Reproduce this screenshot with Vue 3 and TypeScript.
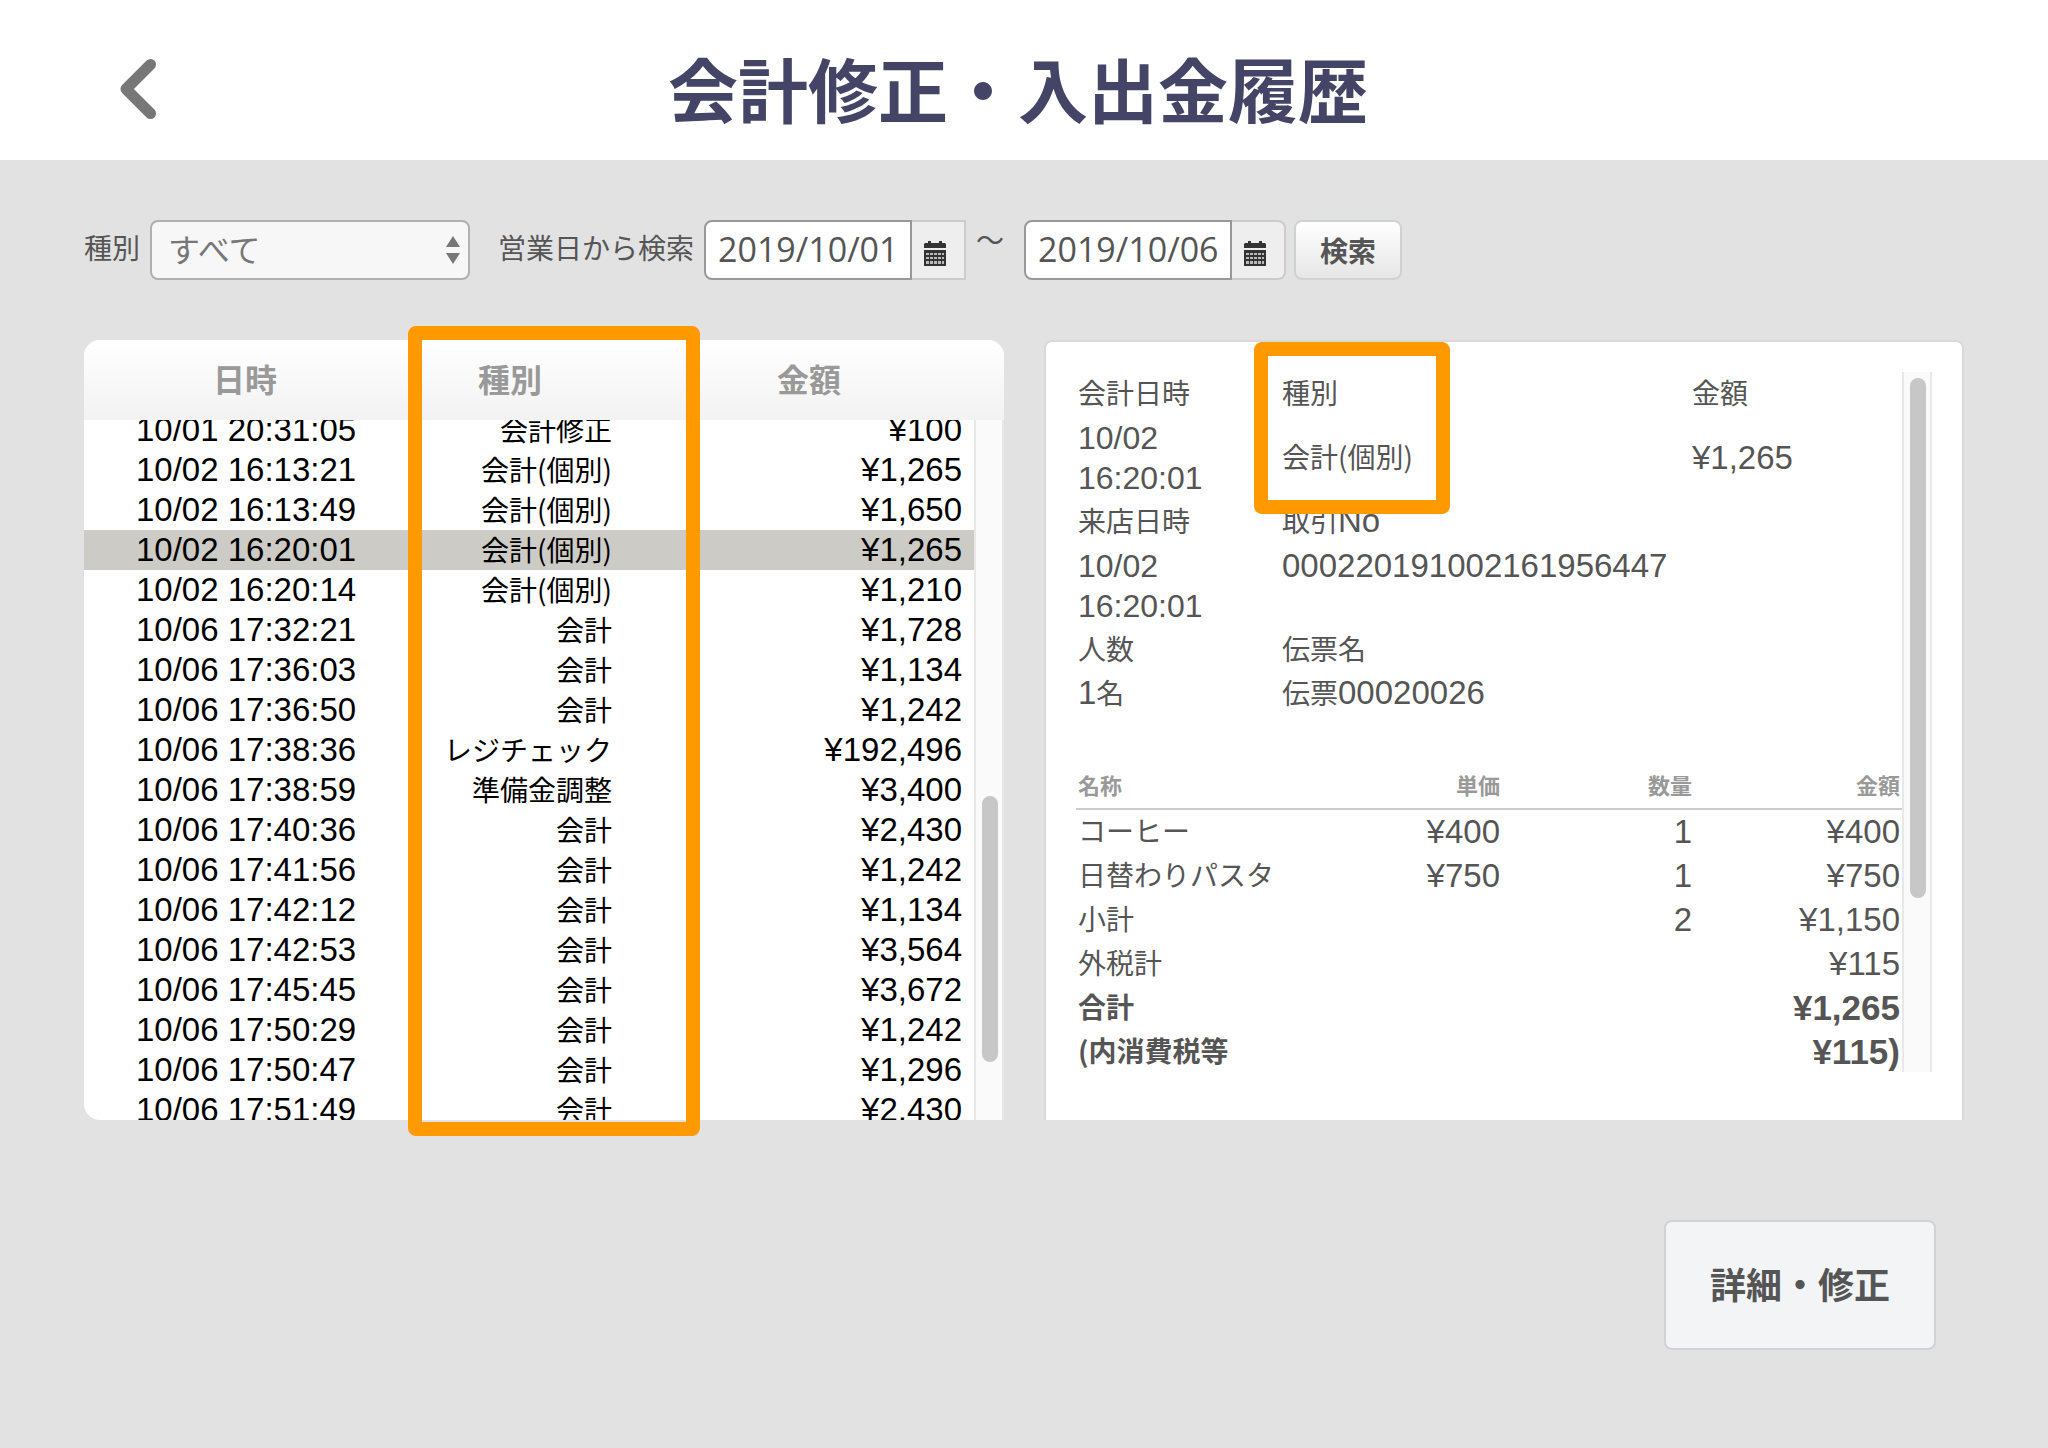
<script setup lang="ts">
import { ref } from 'vue'

interface HistoryRow {
  date: string
  type: string
  amount: string
}

interface ItemRow {
  name: string
  unit?: string
  qty?: string
  amount: string
  strong?: boolean
}

const rows: HistoryRow[] = [
  { date: '10/01 20:31:05', type: '会計修正', amount: '¥100' },
  { date: '10/02 16:13:21', type: '会計(個別)', amount: '¥1,265' },
  { date: '10/02 16:13:49', type: '会計(個別)', amount: '¥1,650' },
  { date: '10/02 16:20:01', type: '会計(個別)', amount: '¥1,265' },
  { date: '10/02 16:20:14', type: '会計(個別)', amount: '¥1,210' },
  { date: '10/06 17:32:21', type: '会計', amount: '¥1,728' },
  { date: '10/06 17:36:03', type: '会計', amount: '¥1,134' },
  { date: '10/06 17:36:50', type: '会計', amount: '¥1,242' },
  { date: '10/06 17:38:36', type: 'レジチェック', amount: '¥192,496' },
  { date: '10/06 17:38:59', type: '準備金調整', amount: '¥3,400' },
  { date: '10/06 17:40:36', type: '会計', amount: '¥2,430' },
  { date: '10/06 17:41:56', type: '会計', amount: '¥1,242' },
  { date: '10/06 17:42:12', type: '会計', amount: '¥1,134' },
  { date: '10/06 17:42:53', type: '会計', amount: '¥3,564' },
  { date: '10/06 17:45:45', type: '会計', amount: '¥3,672' },
  { date: '10/06 17:50:29', type: '会計', amount: '¥1,242' },
  { date: '10/06 17:50:47', type: '会計', amount: '¥1,296' },
  { date: '10/06 17:51:49', type: '会計', amount: '¥2,430' },
]

const items: ItemRow[] = [
  { name: 'コーヒー', unit: '¥400', qty: '1', amount: '¥400' },
  { name: '日替わりパスタ', unit: '¥750', qty: '1', amount: '¥750' },
  { name: '小計', qty: '2', amount: '¥1,150' },
  { name: '外税計', amount: '¥115' },
  { name: '合計', amount: '¥1,265', strong: true },
  { name: '(内消費税等', amount: '¥115)', strong: true },
]

const selected = ref(3)
const kind = ref('all')
const dateFrom = ref('2019/10/01')
const dateTo = ref('2019/10/06')
</script>

<template>
  <div class="page">
    <header class="header">
      <button class="back" type="button" aria-label="戻る">
        <svg width="36" height="60" viewBox="0 0 36 60" fill="none" stroke="#777" stroke-width="11" stroke-linecap="round" stroke-linejoin="round">
          <path d="M30.5 5.5 L6 30 L30.5 54.5" />
        </svg>
      </button>
      <h1 class="title">会計修正・入出金履歴</h1>
    </header>

    <main class="main">
      <form class="filters" @submit.prevent>
        <label class="label" for="kind">種別</label>
        <div class="select-wrap">
          <select id="kind" v-model="kind" class="select">
            <option value="all">すべて</option>
          </select>
          <svg class="arrows" width="14" height="28" viewBox="0 0 14 28" fill="#777" aria-hidden="true">
            <path d="M7 0 L14 11 H0 Z M0 17 H14 L7 28 Z" />
          </svg>
        </div>

        <label class="label range-label" for="from">営業日から検索</label>
        <div class="date">
          <input id="from" v-model="dateFrom" class="date-input" type="text" />
          <button class="date-button" type="button" aria-label="開始日を選択">
            <svg class="calendar" width="24" height="26" viewBox="0 0 24 26" aria-hidden="true">
              <path fill="#333" d="M5 0h3v2h8V0h3v2h3l1 1v4H1V3l1-1h3z" />
              <path fill="#333" d="M1 9h22v16H1z" />
              <path fill="#bbb" d="M3 12h3v2H3zM7 12h3v2H7zM11 12h3v2h-3zM15 12h3v2h-3zM19 12h2v2h-2zM3 16h3v2H3zM7 16h3v2H7zM11 16h3v2h-3zM15 16h3v2h-3zM19 16h2v2h-2zM3 20h3v3H3zM7 20h3v3H7zM11 20h3v3h-3zM15 20h3v3h-3zM19 20h2v3h-2z" />
            </svg>
          </button>
        </div>
        <span class="tilde">〜</span>
        <div class="date">
          <input v-model="dateTo" class="date-input" type="text" aria-label="終了日" />
          <button class="date-button rounded" type="button" aria-label="終了日を選択">
            <svg class="calendar" width="24" height="26" viewBox="0 0 24 26" aria-hidden="true">
              <path fill="#333" d="M5 0h3v2h8V0h3v2h3l1 1v4H1V3l1-1h3z" />
              <path fill="#333" d="M1 9h22v16H1z" />
              <path fill="#bbb" d="M3 12h3v2H3zM7 12h3v2H7zM11 12h3v2h-3zM15 12h3v2h-3zM19 12h2v2h-2zM3 16h3v2H3zM7 16h3v2H7zM11 16h3v2h-3zM15 16h3v2h-3zM19 16h2v2h-2zM3 20h3v3H3zM7 20h3v3H7zM11 20h3v3h-3zM15 20h3v3h-3zM19 20h2v3h-2z" />
            </svg>
          </button>
        </div>
        <button class="search" type="submit">検索</button>
      </form>

      <div class="columns">
        <section class="history">
          <table class="history-table">
            <thead>
              <tr>
                <th scope="col">日時</th>
                <th scope="col">種別</th>
                <th scope="col">金額</th>
              </tr>
            </thead>
            <tbody>
              <tr
                v-for="(row, i) in rows"
                :key="row.date"
                :class="{ selected: i === selected }"
                @click="selected = i"
              >
                <td class="num date-cell">{{ row.date }}</td>
                <td class="type-cell">{{ row.type }}</td>
                <td class="num amount-cell">{{ row.amount }}</td>
              </tr>
            </tbody>
          </table>
          <div class="track history-track"><div class="thumb"></div></div>
          <div class="highlight highlight-column"></div>
        </section>

        <section class="detail">
          <div class="detail-body">
            <table class="info">
              <colgroup>
                <col class="info-first" />
                <col />
                <col class="info-last" />
              </colgroup>
              <tbody>
                <tr>
                  <th scope="col">会計日時</th>
                  <th scope="col">種別</th>
                  <th scope="col">金額</th>
                </tr>
                <tr>
                  <td class="num time">10/02<br />16:20:01</td>
                  <td class="kanji">会計(個別)</td>
                  <td class="num">¥1,265</td>
                </tr>
                <tr>
                  <th scope="col">来店日時</th>
                  <th scope="col" colspan="2">取引<span class="num">No</span></th>
                </tr>
                <tr>
                  <td class="num time">10/02<br />16:20:01</td>
                  <td class="num top" colspan="2">000220191002161956447</td>
                </tr>
                <tr>
                  <th scope="col">人数</th>
                  <th scope="col" colspan="2">伝票名</th>
                </tr>
                <tr>
                  <td class="kanji"><span class="num">1</span>名</td>
                  <td class="kanji" colspan="2">伝票<span class="num">00020026</span></td>
                </tr>
              </tbody>
            </table>

            <table class="items">
              <colgroup>
                <col />
                <col class="col-unit" />
                <col class="col-qty" />
                <col class="col-amount" />
              </colgroup>
              <thead>
                <tr>
                  <th scope="col">名称</th>
                  <th scope="col">単価</th>
                  <th scope="col">数量</th>
                  <th scope="col">金額</th>
                </tr>
              </thead>
              <tbody>
                <tr v-for="item in items" :key="item.name" :class="{ strong: item.strong }">
                  <td class="kanji">{{ item.name }}</td>
                  <td class="num">{{ item.unit }}</td>
                  <td class="num">{{ item.qty }}</td>
                  <td class="num">{{ item.amount }}</td>
                </tr>
              </tbody>
            </table>
          </div>
          <div class="track detail-track"><div class="thumb"></div></div>
          <div class="highlight highlight-type"></div>
        </section>
      </div>

      <div class="actions">
        <button class="edit" type="button">詳細・修正</button>
      </div>
    </main>
  </div>
</template>

<style>
body {
  margin: 0;
  background: #e2e2e2;
}
</style>

<style scoped>
* {
  box-sizing: border-box;
}

.page {
  min-height: 100vh;
  background: #e2e2e2;
  color: #555;
  font-family: "Noto Sans CJK JP", sans-serif;
  font-size: 28px;
  line-height: 40px;
}

button,
input,
select {
  margin: 0;
  font-family: inherit;
  color: inherit;
}

.num {
  font-family: "Liberation Sans", sans-serif;
  font-size: 33px;
}

/* header */
.header {
  display: grid;
  grid-template-columns: 160px 1fr 160px;
  align-items: center;
  height: 160px;
  padding-right: 12px;
  background: #fff;
}

.back {
  display: flex;
  justify-content: flex-end;
  width: 156px;
  padding: 0;
  border: 0;
  background: none;
  margin-top: 18px;
}

.title {
  margin: 16px 0 0;
  text-align: center;
  font-size: 70px;
  line-height: 80px;
  font-weight: 700;
  color: #446;
}

.main {
  padding: 60px 84px;
}

/* filters */
.filters {
  display: flex;
  align-items: center;
  height: 60px;
}

.label {
  margin: 0 10px 6px 0;
}

.range-label {
  margin-left: 28px;
}

.select-wrap {
  position: relative;
}

.select {
  appearance: none;
  display: block;
  width: 320px;
  height: 60px;
  padding: 0 40px 4px 16px;
  border: 2px solid #b0b0b0;
  border-radius: 8px;
  background: #f7f7f7;
  color: #777;
  font-size: 32px;
}

.arrows {
  position: absolute;
  top: 16px;
  right: 10px;
  pointer-events: none;
}

.date {
  display: flex;
}

.date-input {
  width: 208px;
  height: 60px;
  padding: 0 0 2px 12px;
  border: 2px solid #999;
  border-radius: 8px 0 0 8px;
  background: #fff;
  font-family: "Open Sans", sans-serif;
  font-size: 34px;
}

.date-button {
  display: flex;
  align-items: flex-end;
  width: 54px;
  height: 60px;
  padding: 0 0 11px 11px;
  border: 2px solid #ccc;
  border-left: 0;
  background: #eee;
}

.date-button.rounded {
  border-radius: 0 8px 8px 0;
}

.tilde {
  margin: 0 20px 22px 10px;
}

.search {
  width: 108px;
  height: 60px;
  margin-left: 8px;
  padding: 0;
  border: 2px solid #ced2d6;
  border-radius: 8px;
  background: linear-gradient(#fff, #e6e6e6);
  font-size: 28px;
  font-weight: 700;
}

/* panels */
.columns {
  display: grid;
  grid-template-columns: 1fr 1fr;
  gap: 40px;
  margin-top: 60px;
}

.history,
.detail {
  position: relative;
}

.history-table {
  display: block;
  overflow: hidden;
  border-radius: 16px 16px 0 16px;
  background: #fff;
  color: #000;
}

.history-table thead,
.history-table tbody {
  display: block;
}

.history-table tr {
  display: grid;
  grid-template-columns: 322px 208px 1fr;
}

.history-table thead {
  position: relative;
  z-index: 1;
  height: 80px;
  background: linear-gradient(#fff, #f2f2f2);
}

.history-table th {
  padding: 0;
  color: #999;
  font-size: 32px;
  line-height: 76px;
  font-weight: 700;
  text-align: center;
}

.history-table tbody {
  height: 700px;
  margin-right: 30px;
  overflow: hidden;
}

/* the list is scrolled a quarter of a row */
.history-table tbody tr:first-child {
  margin-top: -10px;
}

.history-table td {
  height: 40px;
  padding: 0;
  white-space: nowrap;
}

.history-table .date-cell {
  padding-left: 52px;
}

.history-table .type-cell {
  padding-right: 2px;
  line-height: 38px;
  text-align: right;
}

.history-table .amount-cell {
  padding-right: 12px;
  text-align: right;
}

.selected {
  background: #cccbc5;
}

.track {
  position: absolute;
  width: 30px;
  padding: 0 6px;
  border: 2px solid #e8e8e8;
  border-width: 0 2px;
  background: #fafafa;
}

.thumb {
  width: 16px;
  border-radius: 8px;
  background: #c7c7c7;
}

.history-track {
  top: 80px;
  right: 0;
  bottom: 0;
  padding-top: 376px;
}

.history-track .thumb {
  height: 266px;
}

.detail {
  padding: 30px 60px 48px 30px;
  border: 2px solid #d9d9d9;
  border-bottom: 0;
  border-radius: 8px 8px 0 0;
  background: #fff;
}

.detail-track {
  top: 30px;
  right: 30px;
  bottom: 48px;
  padding-top: 6px;
}

.detail-track .thumb {
  height: 520px;
}

.detail-body {
  height: 700px;
  overflow: hidden;
}

.info,
.items {
  width: 100%;
  table-layout: fixed;
  border-collapse: collapse;
}

.info th,
.info td,
.items th,
.items td {
  height: 44px;
  padding: 2px;
  line-height: 40px;
  text-align: left;
  font-weight: 400;
  vertical-align: middle;
}

.info th,
.items th,
.info .kanji,
.items .kanji {
  padding: 0 2px 4px;
}

.info span {
  line-height: 36px;
}

.info .time {
  font-size: 32px;
}

.info .top {
  vertical-align: top;
}

.info-first {
  width: 204px;
}

.info-last {
  width: 212px;
}

.items {
  margin-top: 48px;
}

.items thead tr {
  border-bottom: 2px solid #ccc;
}

.items th {
  color: #999;
  font-size: 22px;
  font-weight: 700;
}

.items th:not(:first-child),
.items td:not(:first-child) {
  text-align: right;
}

.items .strong td {
  font-weight: 700;
}

.items .strong .num {
  font-size: 35px;
}

.col-unit,
.col-qty {
  width: 192px;
}

.col-amount {
  width: 208px;
}

/* orange frames over the type column and the type field */
.highlight {
  position: absolute;
  border: 14px solid #f90;
  border-radius: 8px;
  pointer-events: none;
  z-index: 2;
}

.highlight-column {
  top: -14px;
  bottom: -16px;
  left: 324px;
  width: 292px;
}

.highlight-type {
  top: 0;
  left: 208px;
  width: 196px;
  height: 172px;
}

/* footer action */
.actions {
  display: flex;
  justify-content: flex-end;
  margin-top: 100px;
  padding-right: 28px;
}

.edit {
  height: 130px;
  padding: 0 44px 4px;
  border: 2px solid #d0d2d7;
  border-radius: 8px;
  background: #f3f4f6;
  font-size: 36px;
  font-weight: 700;
}
</style>
